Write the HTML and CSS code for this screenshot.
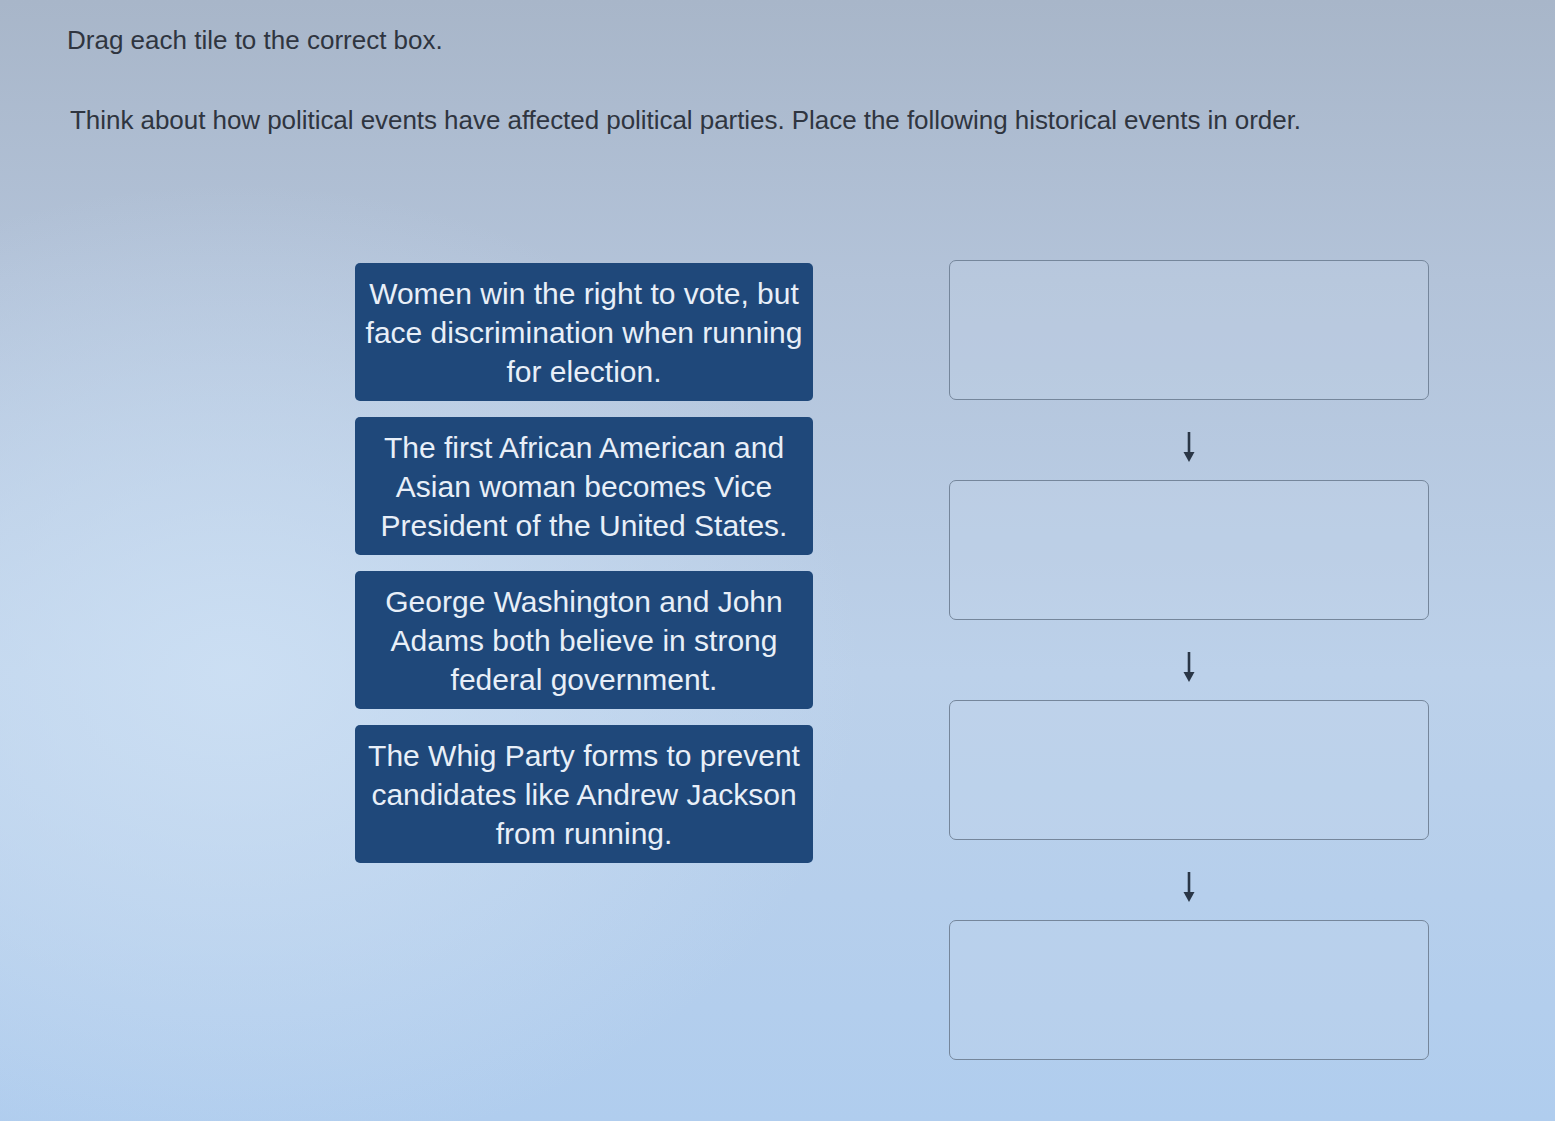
FILE: index.html
```html
<!DOCTYPE html>
<html lang="en">
<head>
  <meta charset="UTF-8" />
  <title>Order the Events</title>
  <link rel="stylesheet" href="styles.css">
</head>
<body>
  <div class="page">
    <p class="prompt">Drag each tile to the correct box.</p>
    <p class="prompt question">Think about how political events have affected political parties. Place the following historical events in order.</p>

    <div class="board">
      <div class="tiles">
        <div class="tile">Women win the right to vote, but face discrimination when running for election.</div>
        <div class="tile">The first African American and Asian woman becomes Vice President of the United States.</div>
        <div class="tile">George Washington and John Adams both believe in strong federal government.</div>
        <div class="tile">The Whig Party forms to prevent candidates like Andrew Jackson from running.</div>
      </div>

      <div class="slots">
        <div class="slot"></div>
        <div class="step">
          <svg width="14" height="32" viewBox="0 0 14 32"><path d="M7 1v23" stroke="#2a3646" stroke-width="2.6"/><path d="M1.5 21l5.5 10 5.5-10z" fill="#2a3646"/></svg>
        </div>
        <div class="slot"></div>
        <div class="step">
          <svg width="14" height="32" viewBox="0 0 14 32"><path d="M7 1v23" stroke="#2a3646" stroke-width="2.6"/><path d="M1.5 21l5.5 10 5.5-10z" fill="#2a3646"/></svg>
        </div>
        <div class="slot"></div>
        <div class="step">
          <svg width="14" height="32" viewBox="0 0 14 32"><path d="M7 1v23" stroke="#2a3646" stroke-width="2.6"/><path d="M1.5 21l5.5 10 5.5-10z" fill="#2a3646"/></svg>
        </div>
        <div class="slot"></div>
      </div>
    </div>
  </div>
</body>
</html>
```

FILE: styles.css
```css
/* Page */
body {
  margin: 0;
  height: 100vh;
  font-family: "Liberation Sans", Arial, sans-serif;
  color: #2f3540;
  background:
    radial-gradient(ellipse 900px 700px at 15% 60%, rgba(205, 224, 244, 0.9), rgba(205, 224, 244, 0) 70%),
    linear-gradient(180deg, #a8b6c9 0%, #b3c3d9 25%, #bcd1ea 60%, #b0cdee 100%);
  overflow: hidden;
}

.page {
  padding: 24px 0 0 67px;
}

.prompt {
  margin: 0;
  font-size: 26px;
  line-height: 32px;
}

.question {
  margin-top: 48px;
  padding-left: 3px;
  letter-spacing: -0.05px;
}

/* Tiles and drop boxes */
.board {
  display: flex;
  margin-top: 124px;
}

.tiles {
  display: flex;
  flex-direction: column;
  gap: 16px;
  width: 458px;
  margin-left: 288px;
  padding-top: 3px;
}

.tile {
  height: 138px;
  padding: 0 6px;
  box-sizing: border-box;
  display: flex;
  align-items: center;
  justify-content: center;
  text-align: center;
  background-color: #1f487a;
  border-radius: 5px;
  color: #e8eff8;
  font-size: 30px;
  line-height: 39px;
}

.slots {
  display: flex;
  flex-direction: column;
  width: 480px;
  margin-left: 136px;
}

.slot {
  height: 140px;
  box-sizing: border-box;
  border: 1.5px solid #75869b;
  border-radius: 7px;
  background-color: rgba(200, 215, 235, 0.25);
}

.step {
  height: 80px;
  display: flex;
  align-items: center;
  justify-content: center;
  padding-top: 14px;
  box-sizing: border-box;
}
```
